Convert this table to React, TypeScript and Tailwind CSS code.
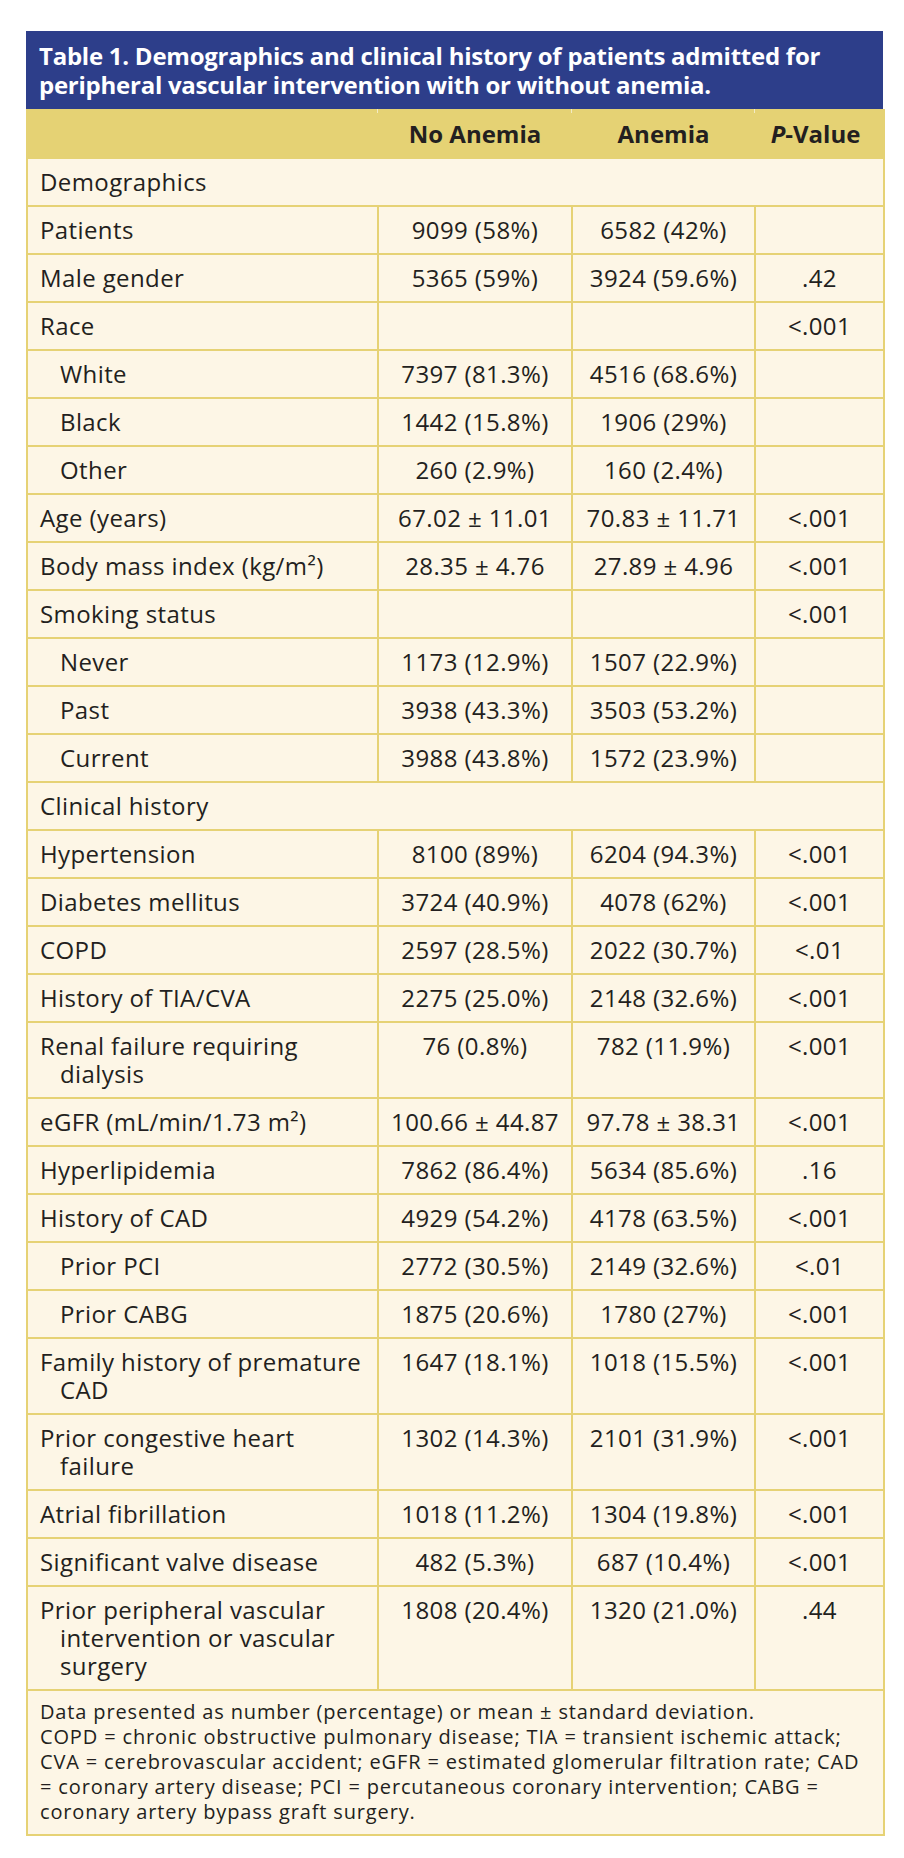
import React from "react";

type Row =
  | { kind: "section"; label: string }
  | { kind: "data"; label: string[]; a: string; b: string; p: string; indent?: boolean };

const rows: Row[] = [
  { kind: "section", label: "Demographics" },
  { kind: "data", label: ["Patients"], a: "9099 (58%)", b: "6582 (42%)", p: "" },
  { kind: "data", label: ["Male gender"], a: "5365 (59%)", b: "3924 (59.6%)", p: ".42" },
  { kind: "data", label: ["Race"], a: "", b: "", p: "<.001" },
  { kind: "data", label: ["White"], a: "7397 (81.3%)", b: "4516 (68.6%)", p: "", indent: true },
  { kind: "data", label: ["Black"], a: "1442 (15.8%)", b: "1906 (29%)", p: "", indent: true },
  { kind: "data", label: ["Other"], a: "260 (2.9%)", b: "160 (2.4%)", p: "", indent: true },
  { kind: "data", label: ["Age (years)"], a: "67.02 ± 11.01", b: "70.83 ± 11.71", p: "<.001" },
  { kind: "data", label: ["Body mass index (kg/m²)"], a: "28.35 ± 4.76", b: "27.89 ± 4.96", p: "<.001" },
  { kind: "data", label: ["Smoking status"], a: "", b: "", p: "<.001" },
  { kind: "data", label: ["Never"], a: "1173 (12.9%)", b: "1507 (22.9%)", p: "", indent: true },
  { kind: "data", label: ["Past"], a: "3938 (43.3%)", b: "3503 (53.2%)", p: "", indent: true },
  { kind: "data", label: ["Current"], a: "3988 (43.8%)", b: "1572 (23.9%)", p: "", indent: true },
  { kind: "section", label: "Clinical history" },
  { kind: "data", label: ["Hypertension"], a: "8100 (89%)", b: "6204 (94.3%)", p: "<.001" },
  { kind: "data", label: ["Diabetes mellitus"], a: "3724 (40.9%)", b: "4078 (62%)", p: "<.001" },
  { kind: "data", label: ["COPD"], a: "2597 (28.5%)", b: "2022 (30.7%)", p: "<.01" },
  { kind: "data", label: ["History of TIA/CVA"], a: "2275 (25.0%)", b: "2148 (32.6%)", p: "<.001" },
  { kind: "data", label: ["Renal failure requiring", "dialysis"], a: "76 (0.8%)", b: "782 (11.9%)", p: "<.001" },
  { kind: "data", label: ["eGFR (mL/min/1.73 m²)"], a: "100.66 ± 44.87", b: "97.78 ± 38.31", p: "<.001" },
  { kind: "data", label: ["Hyperlipidemia"], a: "7862 (86.4%)", b: "5634 (85.6%)", p: ".16" },
  { kind: "data", label: ["History of CAD"], a: "4929 (54.2%)", b: "4178 (63.5%)", p: "<.001" },
  { kind: "data", label: ["Prior PCI"], a: "2772 (30.5%)", b: "2149 (32.6%)", p: "<.01", indent: true },
  { kind: "data", label: ["Prior CABG"], a: "1875 (20.6%)", b: "1780 (27%)", p: "<.001", indent: true },
  { kind: "data", label: ["Family history of premature", "CAD"], a: "1647 (18.1%)", b: "1018 (15.5%)", p: "<.001" },
  { kind: "data", label: ["Prior congestive heart", "failure"], a: "1302 (14.3%)", b: "2101 (31.9%)", p: "<.001" },
  { kind: "data", label: ["Atrial fibrillation"], a: "1018 (11.2%)", b: "1304 (19.8%)", p: "<.001" },
  { kind: "data", label: ["Significant valve disease"], a: "482 (5.3%)", b: "687 (10.4%)", p: "<.001" },
  {
    kind: "data",
    label: ["Prior peripheral vascular", "intervention or vascular", "surgery"],
    a: "1808 (20.4%)",
    b: "1320 (21.0%)",
    p: ".44",
  },
];

const cell = "border-2 border-[#e6d275] align-top py-[9px] leading-[28px]";
const tick =
  "relative before:content-[''] before:absolute before:left-[-2px] before:top-[-2px] before:w-[1px] before:h-[4px] before:bg-[#f3ebc4]";

export default function App() {
  return (
    <div
      className="w-[904px] h-[1858px] bg-white pt-[31px] px-[26px] text-[#231f20]"
      style={{ fontFamily: "'Open Sans', 'Liberation Sans', sans-serif" }}
    >
      <div className="w-[857px]">
        <div className="bg-[#2d3e8a] text-white font-bold text-[24px] leading-[29px] tracking-[-0.25px] px-[13px] pt-[10px] pb-[10px] whitespace-nowrap">
          Table 1. Demographics and clinical history of patients admitted for
          <br />
          peripheral vascular intervention with or without anemia.
        </div>
        <table className="w-full border-collapse table-fixed text-[24px] tracking-[0.4px]">
          <colgroup>
            <col className="w-[351px]" />
            <col className="w-[194px]" />
            <col className="w-[183px]" />
            <col className="w-[129px]" />
          </colgroup>
          <thead>
            <tr className="bg-[#e5d274]">
              <th className="border-2 border-[#e5d274] py-[9px] leading-[28px] h-[48px]"></th>
              <th className={`${tick} border-2 border-[#e5d274] py-[9px] leading-[28px] font-bold text-center tracking-normal`}>
                No Anemia
              </th>
              <th className={`${tick} border-2 border-[#e5d274] py-[9px] leading-[28px] font-bold text-center tracking-normal`}>
                Anemia
              </th>
              <th
                className={`${tick} border-2 border-[#e5d274] py-[9px] leading-[28px] font-bold text-center pr-[8px] tracking-normal`}
              >
                <span className="italic">P</span>-Value
              </th>
            </tr>
          </thead>
          <tbody className="bg-[#fdf6e6]">
            {rows.map((r, i) =>
              r.kind === "section" ? (
                <tr key={i}>
                  <td colSpan={4} className={`${cell} px-[12px]`}>
                    {r.label}
                  </td>
                </tr>
              ) : (
                <tr key={i}>
                  <td
                    className={`${cell} pr-[4px] whitespace-nowrap ${
                      r.indent ? "pl-[32px]" : "pl-[32px] indent-[-20px]"
                    }`}
                  >
                    {r.label.map((l, j) => (
                      <React.Fragment key={j}>
                        {j > 0 && <br />}
                        {l}
                      </React.Fragment>
                    ))}
                  </td>
                  <td className={`${cell} text-center px-[2px] whitespace-nowrap`}>{r.a}</td>
                  <td className={`${cell} text-center px-[2px] whitespace-nowrap`}>{r.b}</td>
                  <td className={`${cell} text-center px-[2px] whitespace-nowrap`}>{r.p}</td>
                </tr>
              )
            )}
            <tr>
              <td
                colSpan={4}
                className="border-2 border-[#e6d275] px-[12px] pt-[8px] pb-[10px] text-[20px] leading-[25px] tracking-[0.85px] whitespace-nowrap"
              >
                Data presented as number (percentage) or mean ± standard deviation.
                <br />
                COPD = chronic obstructive pulmonary disease; TIA = transient ischemic attack;
                <br />
                CVA = cerebrovascular accident; eGFR = estimated glomerular filtration rate; CAD
                <br />= coronary artery disease; PCI = percutaneous coronary intervention; CABG =
                <br />
                coronary artery bypass graft surgery.
              </td>
            </tr>
          </tbody>
        </table>
      </div>
    </div>
  );
}
